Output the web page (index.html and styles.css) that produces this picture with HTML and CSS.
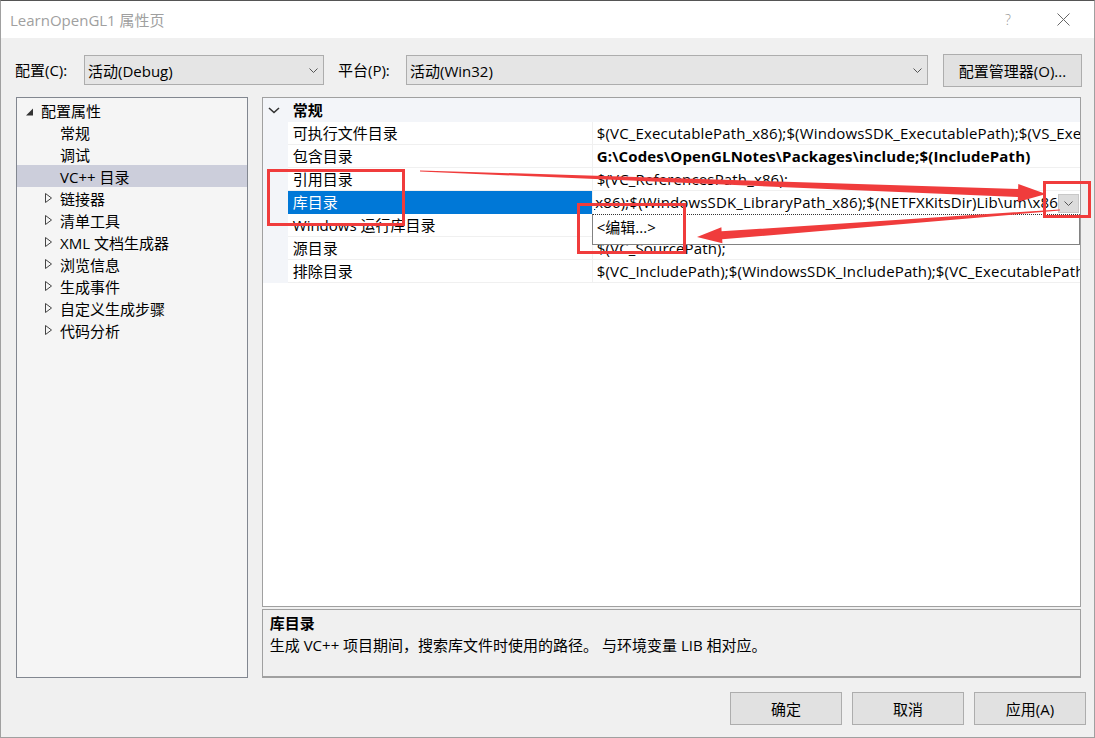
FILE: index.html
```html
<!DOCTYPE html>
<html lang="zh-CN">

<head>
    <meta charset="UTF-8">
    <title>LearnOpenGL1 属性页</title>
    <link rel="stylesheet" href="styles.css">
</head>

<body>
    <div class="window">
        <div class="titlebar">
            <span class="title">LearnOpenGL1 属性页</span>
            <span class="help">?</span>
            <svg class="close" width="13" height="13" viewBox="0 0 13 13">
                <path d="M0.5 0.5 L12.5 12.5 M12.5 0.5 L0.5 12.5" stroke="#666" stroke-width="1" fill="none" />
            </svg>
        </div>

        <div class="toolbar">
            <span class="lbl">配置(C):</span>
            <div class="combo combo-config">
                <span>活动(Debug)</span>
                <svg class="chev" width="9" height="5" viewBox="0 0 9 5"><path d="M0.5 0.5 L4.5 4.5 L8.5 0.5" stroke="#555" fill="none" /></svg>
            </div>
            <span class="lbl lbl-platform">平台(P):</span>
            <div class="combo combo-platform">
                <span>活动(Win32)</span>
                <svg class="chev" width="9" height="5" viewBox="0 0 9 5"><path d="M0.5 0.5 L4.5 4.5 L8.5 0.5" stroke="#555" fill="none" /></svg>
            </div>
            <div class="btn btn-mgr">配置管理器(O)...</div>
        </div>

        <div class="main">
            <div class="tree">
                <div class="ti root">
                    <svg class="tw" width="16" height="22" viewBox="0 0 16 22"><path d="M8 10 L8 17 L1 17 Z" fill="#333" transform="translate(0,-0.5)" /></svg>
                    <span>配置属性</span>
                </div>
                <div class="ti child"><span class="tw"></span><span>常规</span></div>
                <div class="ti child"><span class="tw"></span><span>调试</span></div>
                <div class="ti child sel"><span class="tw"></span><span>VC++ 目录</span></div>
                <div class="ti child"><svg class="tw" width="16" height="22" viewBox="0 0 16 22"><path d="M1.5 6.5 L7.5 11 L1.5 15.5 Z" stroke="#444" fill="none" /></svg><span>链接器</span></div>
                <div class="ti child"><svg class="tw" width="16" height="22" viewBox="0 0 16 22"><path d="M1.5 6.5 L7.5 11 L1.5 15.5 Z" stroke="#444" fill="none" /></svg><span>清单工具</span></div>
                <div class="ti child"><svg class="tw" width="16" height="22" viewBox="0 0 16 22"><path d="M1.5 6.5 L7.5 11 L1.5 15.5 Z" stroke="#444" fill="none" /></svg><span>XML 文档生成器</span></div>
                <div class="ti child"><svg class="tw" width="16" height="22" viewBox="0 0 16 22"><path d="M1.5 6.5 L7.5 11 L1.5 15.5 Z" stroke="#444" fill="none" /></svg><span>浏览信息</span></div>
                <div class="ti child"><svg class="tw" width="16" height="22" viewBox="0 0 16 22"><path d="M1.5 6.5 L7.5 11 L1.5 15.5 Z" stroke="#444" fill="none" /></svg><span>生成事件</span></div>
                <div class="ti child"><svg class="tw" width="16" height="22" viewBox="0 0 16 22"><path d="M1.5 6.5 L7.5 11 L1.5 15.5 Z" stroke="#444" fill="none" /></svg><span>自定义生成步骤</span></div>
                <div class="ti child"><svg class="tw" width="16" height="22" viewBox="0 0 16 22"><path d="M1.5 6.5 L7.5 11 L1.5 15.5 Z" stroke="#444" fill="none" /></svg><span>代码分析</span></div>
            </div>

            <div class="right">
                <div class="grid">
                    <div class="row head">
                        <div class="gut"><svg width="12" height="7" viewBox="0 0 12 7"><path d="M1 1 L6 5.5 L11 1" stroke="#333" stroke-width="1.6" fill="none" /></svg></div>
                        <div class="cat">常规</div>
                        <div class="catfill"></div>
                    </div>
                    <div class="row">
                        <div class="gut"></div>
                        <div class="name">可执行文件目录</div>
                        <div class="val">$(VC_ExecutablePath_x86);$(WindowsSDK_ExecutablePath);$(VS_ExecutablePath);$(MSBuild_ExecutablePath);$(FxCopDir);$(PATH);</div>
                    </div>
                    <div class="row">
                        <div class="gut"></div>
                        <div class="name">包含目录</div>
                        <div class="val bold">G:\Codes\OpenGLNotes\Packages\include;$(IncludePath)</div>
                    </div>
                    <div class="row">
                        <div class="gut"></div>
                        <div class="name">引用目录</div>
                        <div class="val">$(VC_ReferencesPath_x86);</div>
                    </div>
                    <div class="row">
                        <div class="gut"></div>
                        <div class="name active">库目录</div>
                        <div class="val edit">
                            <div class="edit-text"><span>$(VC_LibraryPath_x86);$(WindowsSDK_LibraryPath_x86);$(NETFXKitsDir)Lib\um\x86</span></div>
                            <div class="drop-btn"><svg width="9" height="5" viewBox="0 0 9 5"><path d="M0.5 0.5 L4.5 4.5 L8.5 0.5" stroke="#555" fill="none" /></svg></div>
                        </div>
                    </div>
                    <div class="row">
                        <div class="gut"></div>
                        <div class="name">Windows 运行库目录</div>
                        <div class="val"></div>
                    </div>
                    <div class="row">
                        <div class="gut"></div>
                        <div class="name">源目录</div>
                        <div class="val">$(VC_SourcePath);</div>
                    </div>
                    <div class="row">
                        <div class="gut"></div>
                        <div class="name">排除目录</div>
                        <div class="val">$(VC_IncludePath);$(WindowsSDK_IncludePath);$(VC_ExecutablePath_x86);$(MSBuild_ExecutablePath)</div>
                    </div>

                    <div class="droplist">
                        <div class="drop-item">&lt;编辑...&gt;</div>
                    </div>
                </div>

                <div class="desc">
                    <div class="desc-title">库目录</div>
                    <div class="desc-text">生成 VC++ 项目期间，搜索库文件时使用的路径。 与环境变量 LIB 相对应。</div>
                </div>
            </div>
        </div>

        <div class="footer">
            <div class="btn btn-ok">确定</div>
            <div class="btn">取消</div>
            <div class="btn">应用(A)</div>
        </div>

        <!-- 截图上的红色标注 -->
        <svg class="marks" width="1095" height="738" viewBox="0 0 1095 738">
            <g fill="none" stroke="#f03c3c" stroke-width="3">
                <rect x="268.5" y="170.5" width="135" height="54" />
                <rect x="578.5" y="204.5" width="106" height="48" />
                <rect x="1044.5" y="182.5" width="45" height="34" />
            </g>
            <g fill="#f03c3c">
                <polygon points="420,170.4 1018.1,188.9 1018.3,184.0 1046,194 1017.7,202.0 1017.9,197.1 420,171.6" />
                <polygon points="1060,209.4 721.6,231.3 721.4,227.3 697,237 722.4,243.3 722.2,239.3 1060,210.6" />
            </g>
        </svg>
    </div>
</body>

</html>
```

FILE: styles.css
```css
* {
    box-sizing: border-box;
}

body {
    margin: 0;
    font-family: "Open Sans", "Noto Sans CJK SC", sans-serif;
    font-size: 15px;
    color: #000;
}

div.window {
    position: relative;
    width: 1095px;
    height: 738px;
    background: #f0f0f0;
    border: 1px solid #a0a0a0;
    border-top-color: #555;
    display: flex;
    flex-direction: column;
    overflow: hidden;
}

/* title */
div.titlebar {
    height: 37px;
    background: #fff;
    display: flex;
    align-items: center;
    padding-left: 9px;
}

span.title {
    color: #a0a0a0;
    line-height: 20px;
}

span.help {
    margin-left: auto;
    margin-right: 46px;
    color: #999;
    font-size: 14px;
    font-weight: 300;
}

svg.close {
    margin-right: 24px;
}

/* toolbar */
div.toolbar {
    height: 59px;
    padding: 5px 0 0 14px;
    display: flex;
    align-items: center;
}

span.lbl {
    width: 69px;
    line-height: 20px;
}

span.lbl-platform {
    width: 68px;
    margin-left: 14px;
}

div.combo {
    height: 30px;
    background: #e5e5e5;
    border: 1px solid #adadad;
    display: flex;
    align-items: center;
    padding: 0 5px 0 3px;
}

div.combo span {
    flex: 1;
}

div.combo-config {
    width: 240px;
}

div.combo-platform {
    width: 522px;
}

div.btn {
    height: 33px;
    background: #e1e1e1;
    border: 1px solid #adadad;
    display: flex;
    align-items: center;
    justify-content: center;
}

div.btn-mgr {
    width: 139px;
    margin-left: 15px;
}

/* main area */
div.main {
    height: 581px;
    display: flex;
    gap: 14px;
    padding: 0 13px 0 15px;
}

div.tree {
    width: 232px;
    background: #f5f5f5;
    border: 1px solid #828790;
    padding-top: 1px;
}

div.ti {
    height: 22px;
    display: flex;
    align-items: center;
    white-space: nowrap;
}

div.ti.root {
    padding-left: 8px;
}

div.ti.child {
    padding-left: 27px;
}

div.ti.sel {
    background: #cccedb;
}

.tw {
    width: 16px;
    flex-shrink: 0;
}

div.right {
    width: 820px;
    display: flex;
    flex-direction: column;
    gap: 2px;
}

div.grid {
    position: relative;
    height: 510px;
    background: #fff;
    border: 1px solid #a0a0a0;
    overflow: hidden;
}

div.row {
    display: grid;
    grid-template-columns: 25px 304px 1fr;
    height: 23px;
    line-height: 22px;
}

div.row.head {
    height: 24px;
    background: #f3f5f9;
}

div.gut {
    background: #f3f5f9;
    display: flex;
    align-items: center;
    justify-content: center;
    padding-right: 2px;
}

div.cat {
    font-weight: bold;
    padding-left: 5px;
    line-height: 24px;
}

div.name {
    padding-left: 5px;
    border-bottom: 1px solid #f0f0f0;
    white-space: nowrap;
}

div.name.active {
    background: #0078d7;
    color: #fff;
    border-bottom-color: #0078d7;
}

div.val {
    padding-left: 4px;
    border-left: 1px solid #f0f0f0;
    border-bottom: 1px solid #f0f0f0;
    white-space: nowrap;
    overflow: hidden;
    letter-spacing: 0.15px;
}

div.val.bold {
    font-weight: bold;
}

div.val.edit {
    display: flex;
    padding-left: 1px;
    border-bottom: none;
}

div.edit-text {
    flex: 1;
    display: flex;
    justify-content: flex-end;
    overflow: hidden;
}

div.edit-text span {
    flex-shrink: 0;
}

div.drop-btn {
    width: 21px;
    height: 19px;
    margin: 3px 1px 0 0;
    background: #dcdcdc;
    border: 1px solid #c8c8c8;
    display: flex;
    align-items: center;
    justify-content: center;
}

div.droplist {
    position: absolute;
    left: 329px;
    top: 116px;
    width: 488px;
    height: 31px;
    background: #fff;
    border: 1px solid #828282;
    border-top: 1px dotted #333;
}

div.drop-item {
    padding-left: 4px;
    line-height: 22px;
    margin-top: 1px;
}

/* description */
div.desc {
    height: 69px;
    background: #f0f0f0;
    border: 1px solid #a0a0a0;
    border-bottom-width: 2px;
    padding: 2px 7px;
    line-height: 22px;
}

div.desc-title {
    font-weight: bold;
}

/* footer */
div.footer {
    display: flex;
    justify-content: flex-end;
    gap: 10px;
    padding: 14px 8px 0 0;
}

div.footer div.btn {
    width: 112px;
}

svg.marks {
    position: absolute;
    left: -1px;
    top: -1px;
    pointer-events: none;
}
```
